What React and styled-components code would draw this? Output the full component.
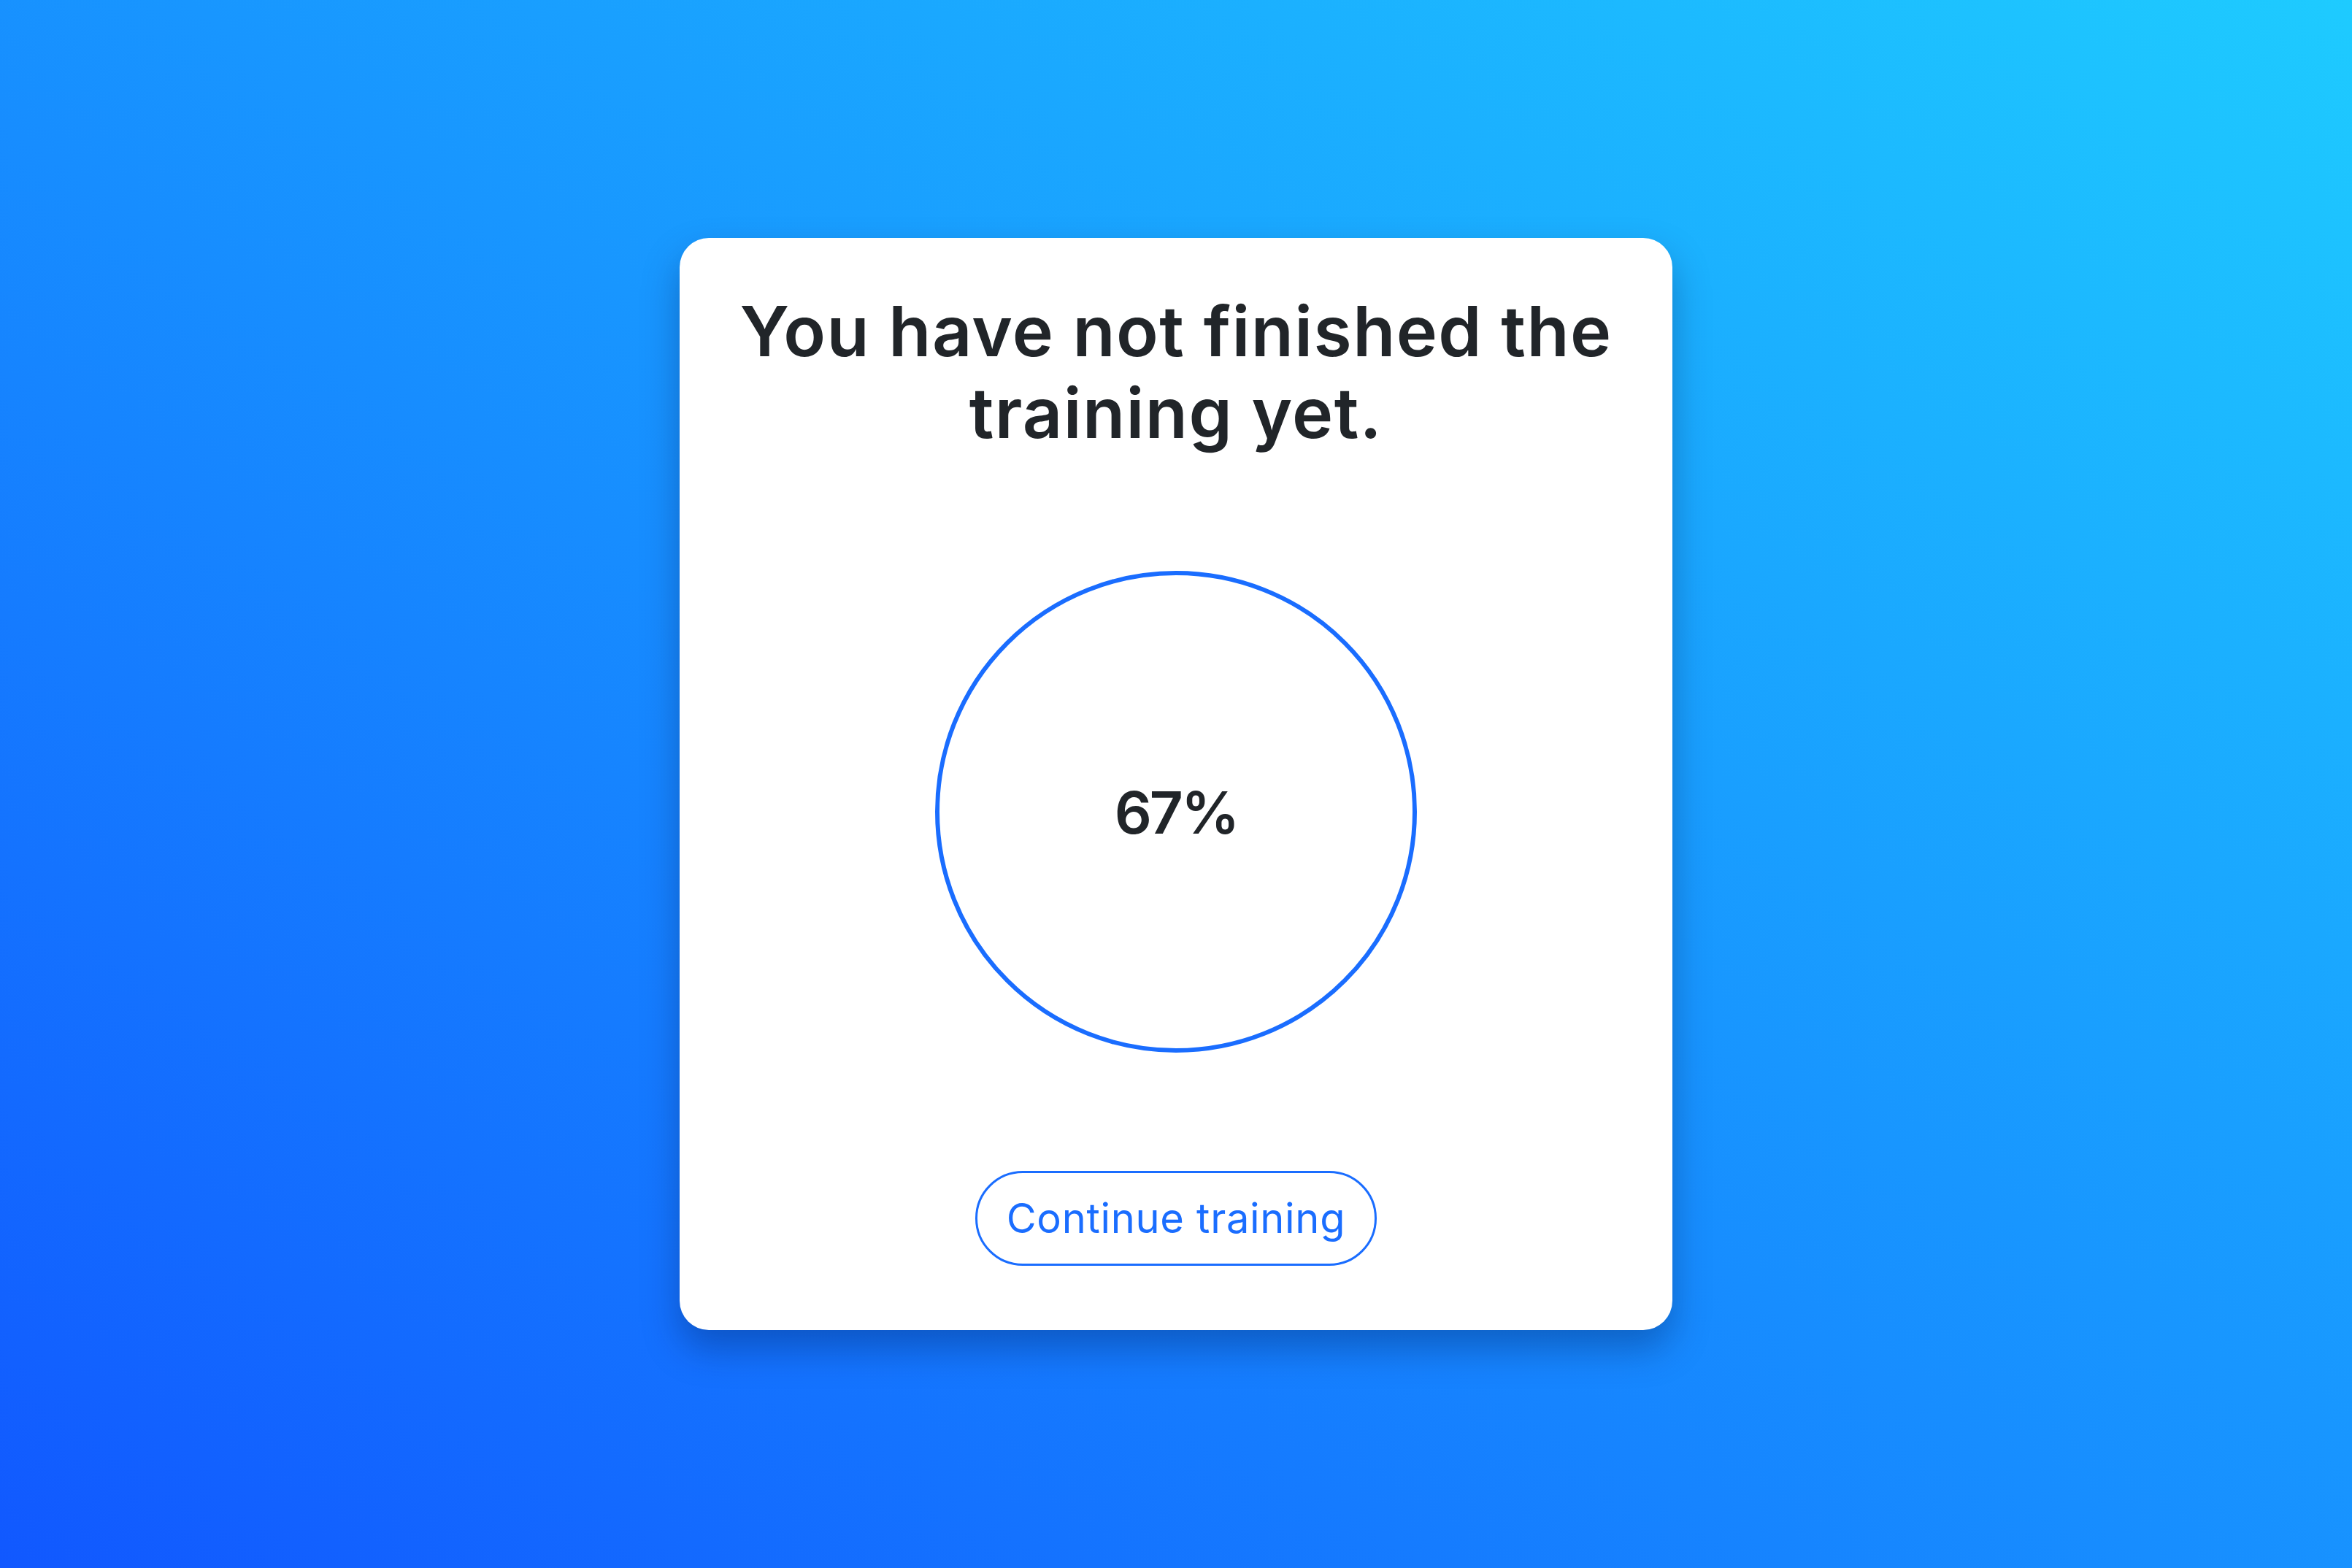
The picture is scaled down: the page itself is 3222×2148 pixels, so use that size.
import React from "react";
import styled, { createGlobalStyle } from "styled-components";

const GlobalStyle = createGlobalStyle`
  html, body {
    margin: 0;
    padding: 0;
  }
  body {
    font-family: "Inter", "Liberation Sans", sans-serif;
  }
`;

const Page = styled.div`
  width: 100vw;
  height: 100vh;
  display: flex;
  align-items: center;
  justify-content: center;
  background: linear-gradient(to top right, #1158ff 0%, #1ecbff 100%);
`;

const Card = styled.div`
  width: 1360px;
  height: 1496px;
  box-sizing: border-box;
  padding: 72px 60px 0;
  display: flex;
  flex-direction: column;
  align-items: center;
  background: #ffffff;
  border-radius: 40px;
  box-shadow: 0 26px 50px rgba(0, 28, 90, 0.35);
`;

const Title = styled.h1`
  margin: 0 0 160px;
  font-family: "Inter", "Liberation Sans", sans-serif;
  font-size: 95px;
  font-weight: 600;
  line-height: 112px;
  letter-spacing: 1.4px;
  color: #212529;
  text-align: center;
`;

const Ring = styled.div`
  width: 660px;
  height: 660px;
  box-sizing: border-box;
  border: 6px solid #1a6dff;
  border-radius: 50%;
  display: flex;
  align-items: center;
  justify-content: center;
  margin-bottom: 162px;
`;

const Percent = styled.span`
  font-family: "Inter", "Liberation Sans", sans-serif;
  font-size: 80px;
  font-weight: 600;
  letter-spacing: -3px;
  color: #212529;
`;

const OutlineButton = styled.button`
  height: 130px;
  padding: 0 40px;
  box-sizing: border-box;
  border: 3px solid #1a6dff;
  border-radius: 999px;
  background: #ffffff;
  color: #1a6dff;
  font-family: "Inter", "Liberation Sans", sans-serif;
  font-size: 56px;
  font-weight: 400;
  letter-spacing: 0.7px;
  cursor: pointer;
`;

const App = () => {
  const progress = 67;

  return (
    <Page>
      <GlobalStyle />
      <Card>
        <Title>
          You have not finished the
          <br />
          training yet.
        </Title>
        <Ring>
          <Percent>{progress}%</Percent>
        </Ring>
        <OutlineButton>Continue training</OutlineButton>
      </Card>
    </Page>
  );
};

export default App;
